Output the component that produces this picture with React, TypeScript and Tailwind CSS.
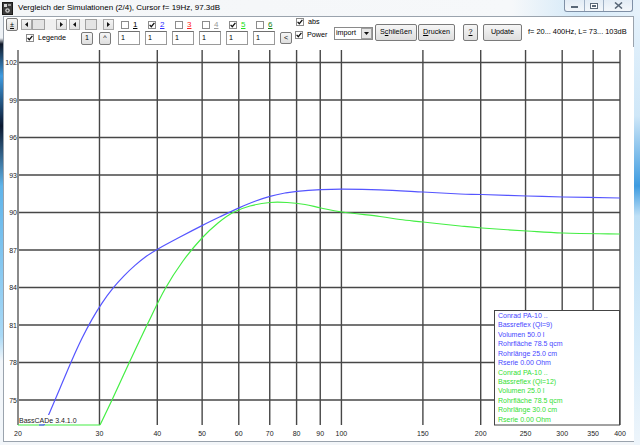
import React from "react";

const L = 18, R = 620, BOT = 425, TOPY = 50;
const LOG20 = Math.log10(20);
const fx = (f: number) => L + (Math.log10(f / 20) / LOG20) * (R - L);
const fy = (db: number) => BOT - (db - 73) * 12.5;

type P = [number, number];
function smooth(pts: P[]) {
  let d = `M${pts[0][0]},${pts[0][1]}`;
  for (let i = 0; i < pts.length - 1; i++) {
    const p0 = pts[i - 1] || pts[i], p1 = pts[i], p2 = pts[i + 1], p3 = pts[i + 2] || p2;
    const c1x = p1[0] + (p2[0] - p0[0]) / 6, c1y = p1[1] + (p2[1] - p0[1]) / 6;
    const c2x = p2[0] - (p3[0] - p1[0]) / 6, c2y = p2[1] - (p3[1] - p1[1]) / 6;
    d += ` C${c1x.toFixed(2)},${c1y.toFixed(2)} ${c2x.toFixed(2)},${c2y.toFixed(2)} ${p2[0]},${p2[1]}`;
  }
  return d;
}

const blue: P[] = [
  [44, 425], [50, 411.7], [60, 388.2], [72, 360], [82, 338.3], [92, 319.4], [102, 303.1], [113, 288.2],
  [124, 275.9], [135, 265.4], [146, 256.5], [158, 248.9], [180, 237], [202, 225.6], [220, 216.8],
  [239, 207.9], [255, 201.2], [270, 196.3], [285, 193], [297, 191.3], [321, 189.7], [342, 189.2],
  [380, 189.8], [423, 192], [460, 194], [482, 194.5], [527, 196], [563, 197], [620, 198],
];
const green: P[] = [
  [100, 425], [112, 400], [130, 361], [148, 323], [165, 289], [183, 261], [202, 238], [218, 223],
  [233, 212.5], [250, 206], [270, 202.5], [287, 202.5], [305, 204.5], [321, 208], [342, 212], [380, 216.5],
  [400, 219.5], [423, 222], [460, 226], [482, 228], [527, 231], [563, 233], [620, 234],
];

const freqs = [20, 30, 40, 50, 60, 70, 80, 90, 100, 150, 200, 250, 300, 350, 400];
const dbs = [102, 99, 96, 93, 90, 87, 84, 81, 78, 75];

const legendBlue = ["Conrad PA-10 ..", "Bassreflex (Ql=9)", "Volumen 50.0 l", "Rohrfläche 78.5 qcm", "Rohrlänge 25.0 cm", "Rserie 0.00 Ohm"];
const legendGreen = ["Conrad PA-10 ..", "Bassreflex (Ql=12)", "Volumen 25.0 l", "Rohrfläche 78.5 qcm", "Rohrlänge 30.0 cm", "Rserie 0.00 Ohm"];

function Check({ checked }: { checked?: boolean }) {
  return (
    <span className="w-[8px] h-[8px] border border-[#8c8c8c] bg-white flex items-center justify-center shrink-0">
      {checked && (
        <svg width="6" height="6" viewBox="0 0 6 6">
          <path d="M0.6 2.9 L2.3 4.7 L5.4 0.9" stroke="#111" strokeWidth="1.3" fill="none" />
        </svg>
      )}
    </span>
  );
}

function Arrow({ dir }: { dir: "l" | "r" | "d" }) {
  const d = dir === "l" ? "M3,0 L0,2.5 L3,5 Z" : dir === "r" ? "M0,0 L3,2.5 L0,5 Z" : "M0,0 L5,0 L2.5,3 Z";
  const w = dir === "d" ? 5 : 3, h = dir === "d" ? 3 : 5;
  return (
    <svg width={w} height={h} viewBox={`0 0 ${w} ${h}`}>
      <path d={d} fill="#111" />
    </svg>
  );
}

const btn = "border border-[#7a7a7a] rounded-[2px] bg-[linear-gradient(to_bottom,#f6f6f6,#dedede)] flex items-center justify-center text-[7.2px] text-black leading-none shrink-0";
const sbBtn = "w-[11px] h-[11px] border border-[#a8a8a8] bg-[linear-gradient(to_bottom,#f4f4f4,#e2e2e2)] flex items-center justify-center shrink-0";
const input = "w-[22px] h-[14px] border border-[#9a9a9a] border-t-[#6f6f6f] bg-white text-[7.2px] leading-none pl-[2px] flex items-center shrink-0";

function TitleBar() {
  return (
    <div className="h-[16px] shrink-0 flex items-start bg-[linear-gradient(to_right,#f4f6f8_0%,#f6f8fa_80%,#d6eaf8_90%,#e6f2fb_100%)]">
      <svg width="11" height="13" viewBox="0 0 11 13" className="ml-[2px] mt-[2px] shrink-0">
        <rect x="0.5" y="0.5" width="10" height="12" fill="#3a3a3a" stroke="#1a1a1a" />
        <rect x="2" y="2" width="3" height="3" fill="#d8d8d8" />
        <rect x="6" y="2" width="3" height="2" fill="#9a9a9a" />
        <circle cx="5.5" cy="8.5" r="2.3" fill="#cfcfcf" />
        <circle cx="5.5" cy="8.5" r="1" fill="#3a3a3a" />
      </svg>
      <span className="ml-[5px] mt-[3px] text-[8px] leading-[10px] text-black whitespace-nowrap">
        Vergleich der Simulationen (2/4), Cursor f= 19Hz, 97.3dB
      </span>
      <div className="ml-auto mr-[7px] flex h-[12px] border border-t-0 border-[#7f90a6] rounded-b-[3px] overflow-hidden bg-[linear-gradient(to_bottom,#e3ecf5,#f3f7fb)]">
        <div className="w-[20px] flex items-end justify-center pb-[3px] border-r border-[#9fb0c4]">
          <div className="w-[7px] h-[2px] border border-[#5a6878] bg-white" />
        </div>
        <div className="w-[19px] flex items-center justify-center border-r border-[#9fb0c4]">
          <div className="w-[8px] h-[6px] border border-[#5a6878] bg-white flex items-center justify-center">
            <div className="w-[4px] h-[2px] border border-[#5a6878]" />
          </div>
        </div>
        <div className="w-[28px] flex items-center justify-center">
          <svg width="9" height="7" viewBox="0 0 9 7">
            <path d="M1,0.5 L4.5,3.5 L8,0.5 M1,6.5 L4.5,3.5 L8,6.5" stroke="#5a6878" strokeWidth="1.6" fill="none" />
          </svg>
        </div>
      </div>
    </div>
  );
}

function Toolbar() {
  const cbs = [
    { n: "1", c: "text-black", on: false },
    { n: "2", c: "text-[#3030ff]", on: true },
    { n: "3", c: "text-[#ff2020]", on: false },
    { n: "4", c: "text-[#9a9a9a]", on: false },
    { n: "5", c: "text-[#20e020]", on: true },
    { n: "6", c: "text-[#108010]", on: false },
  ];
  return (
    <div className="h-[30px] shrink-0 flex">
      <div className="w-[316px] shrink-0 flex flex-col">
        <div className="h-[13px] mt-[1px] flex items-center">
          <div className={`${btn} ml-[2px] w-[12px] h-[13px] underline`}>±</div>
          <div className="ml-[3px] w-[46px] h-[11px] flex bg-[#f0f0f0]">
            <div className={sbBtn}><Arrow dir="l" /></div>
            <div className="w-[13px] h-[11px] border border-[#a0a0a0] bg-[#e4e4e4]" />
            <div className="flex-1" />
            <div className={sbBtn}><Arrow dir="r" /></div>
          </div>
          <div className="ml-[2px] w-[45px] h-[11px] flex bg-[#f0f0f0]">
            <div className={sbBtn}><Arrow dir="l" /></div>
            <div className="w-[5px]" />
            <div className="w-[12px] h-[11px] border border-[#a0a0a0] bg-[#e4e4e4]" />
            <div className="flex-1" />
            <div className={sbBtn}><Arrow dir="r" /></div>
          </div>
          <div className="ml-[7px] flex">
            {cbs.map((c) => (
              <div key={c.n} className="w-[27px] flex items-center">
                <Check checked={c.on} />
                <span className={`ml-[4px] text-[8px] leading-none underline ${c.c}`}>{c.n}</span>
              </div>
            ))}
          </div>
          <div className="ml-[13px] flex items-center self-start whitespace-nowrap">
            <Check checked />
            <span className="ml-[4px] text-[7.2px] leading-none">abs</span>
          </div>
        </div>
        <div className="h-[14px] flex items-center">
          <div className="w-[77px] pl-[22px] flex items-center shrink-0">
            <Check checked />
            <span className="ml-[4px] text-[7.2px] leading-none">Legende</span>
          </div>
          <div className={`${btn} w-[12px] h-[13px]`}>1</div>
          <div className={`${btn} ml-[6px] w-[12px] h-[13px]`}>^</div>
          <div className="ml-[7px] flex gap-[5px]">
            {[0, 1, 2, 3, 4, 5].map((i) => (
              <div key={i} className={input}>1</div>
            ))}
          </div>
          <div className={`${btn} ml-[5px] w-[12px] h-[12px]`}>&lt;</div>
          <div className="ml-[3px] flex items-center self-start whitespace-nowrap">
            <Check checked />
            <span className="ml-[4px] text-[7.2px] leading-none">Power</span>
          </div>
        </div>
      </div>
      <div className="flex items-center">
        <div className="ml-[14px] mt-[2px] w-[39px] h-[13px] border border-[#8a8a8a] bg-white flex items-center">
          <span className="pl-[1px] text-[7.2px] leading-none flex-1">import</span>
          <div className="w-[11px] h-[11px] border border-[#a0a0a0] bg-[#e6e6e6] flex items-center justify-center">
            <Arrow dir="d" />
          </div>
        </div>
        <div className={`${btn} ml-[2px] w-[42px] h-[17px]`}>
          <span>S<span className="underline">c</span>hließen</span>
        </div>
        <div className={`${btn} ml-[1px] w-[37px] h-[17px]`}>
          <span><span className="underline">D</span>rucken</span>
        </div>
        <div className={`${btn} ml-[8px] w-[15px] h-[17px]`}>
          <span className="underline">?</span>
        </div>
        <div className={`${btn} ml-[5px] w-[39px] h-[17px]`}>Update</div>
        <span className="ml-[6px] text-[7.4px] leading-none whitespace-nowrap">f= 20... 400Hz, L= 73... 103dB</span>
      </div>
    </div>
  );
}

function Chart() {
  const gridColor = "#474747";
  return (
    <svg width="630" height="394" viewBox="4 47 630 394" className="block shrink-0" fontFamily="'Liberation Sans', Arial, sans-serif">
      <rect x="4" y="47" width="630" height="394" fill="#ffffff" />
      {dbs.map((d) => (
        <line key={d} x1={L} x2={R} y1={fy(d)} y2={fy(d)} stroke={gridColor} strokeWidth={1.3} />
      ))}
      {freqs.map((f) => (
        <line key={f} x1={fx(f)} x2={fx(f)} y1={TOPY} y2={BOT} stroke={f === 20 ? "#8a8a8a" : gridColor} strokeWidth={f === 20 ? 2 : 1.4} />
      ))}
      <path d="M18,425 L100,425" stroke="#44ee44" strokeWidth={1.2} fill="none" />
      <path d={smooth(green)} stroke="#44ee44" strokeWidth={1.2} fill="none" />
      <path d="M39,425 L44,425" stroke="#5555ff" strokeWidth={1.2} fill="none" />
      <path d={smooth(blue)} stroke="#5555ff" strokeWidth={1.2} fill="none" />
      <rect x="19" y="415" width="61" height="9" fill="#ffffff" />
      <text x="19" y="423" fontSize="7" fill="#222">BassCADe 3.4.1.0</text>
      {dbs.map((d) => (
        <text key={d} x="17" y={fy(d) + 2.5} fontSize="7" textAnchor="end" fill="#222">{d}</text>
      ))}
      {freqs.map((f) => (
        <text key={f} x={fx(f)} y="436" fontSize="7" textAnchor="middle" fill="#222">{f}</text>
      ))}
      <rect x="494.5" y="310.5" width="125" height="114.5" fill="#ffffff" stroke="#444" strokeWidth={1} />
      {legendBlue.map((t, i) => (
        <text key={"b" + i} x="498" y={317.8 + i * 9.45} fontSize="7" fill="#4848ff">{t}</text>
      ))}
      {legendGreen.map((t, i) => (
        <text key={"g" + i} x="498" y={317.8 + (i + 6) * 9.45} fontSize="7" fill="#33e033">{t}</text>
      ))}
    </svg>
  );
}

export default function App() {
  return (
    <div className="w-[640px] h-[445px] overflow-hidden flex flex-col bg-[#f3f6f9] font-['Liberation_Sans',Arial,sans-serif] text-black">
      <TitleBar />
      <div className="flex flex-1 min-h-0">
        <div className="w-[3px] shrink-0 bg-[linear-gradient(to_bottom,#eef2f6_0px,#eef2f6_22px,#101828_28px,#3f9be0_60px,#0b1830_110px,#5fb4ea_170px,#a9d9f6_320px,#f2f6fa_345px)]" />
        <div className="w-[631px] h-[426px] shrink-0 border border-[#9aa3ad] bg-white flex flex-col">
          <Toolbar />
          <Chart />
        </div>
        <div className="flex-1 bg-[linear-gradient(to_bottom,#e4f1fb_0px,#cfe7f8_100px,#3d9be0_170px,#bfe0f6_200px,#d7ecfa_330px,#eef5fb_429px)]" />
      </div>
    </div>
  );
}
